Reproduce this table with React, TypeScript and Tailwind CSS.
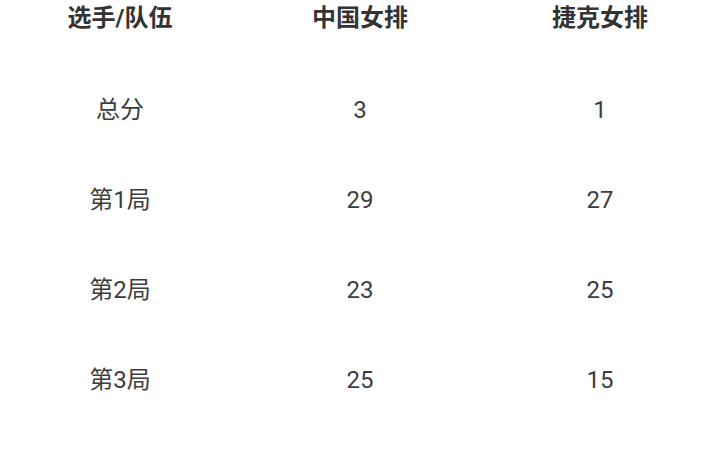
import React from "react";

const rows = [
  ["总分", "3", "1"],
  ["第1局", "29", "27"],
  ["第2局", "23", "25"],
  ["第3局", "25", "15"],
];

export default function App() {
  return (
    <div
      className="w-[720px] h-[451px] bg-white overflow-hidden"
      style={{ fontFamily: "Roboto, 'Noto Sans CJK SC', sans-serif" }}
    >
      <div className="grid grid-cols-3 h-[36px] items-center text-center text-[24px] font-bold text-[#333333]">
        <div>选手/队伍</div>
        <div>中国女排</div>
        <div>捷克女排</div>
      </div>
      <div className="mt-[29px]">
        {rows.map((r, i) => (
          <div
            key={i}
            className="grid grid-cols-3 h-[90px] items-center text-center text-[24px] text-[#3d3d3d]"
          >
            {r.map((c, j) => (
              <div key={j}>{c}</div>
            ))}
          </div>
        ))}
      </div>
    </div>
  );
}
